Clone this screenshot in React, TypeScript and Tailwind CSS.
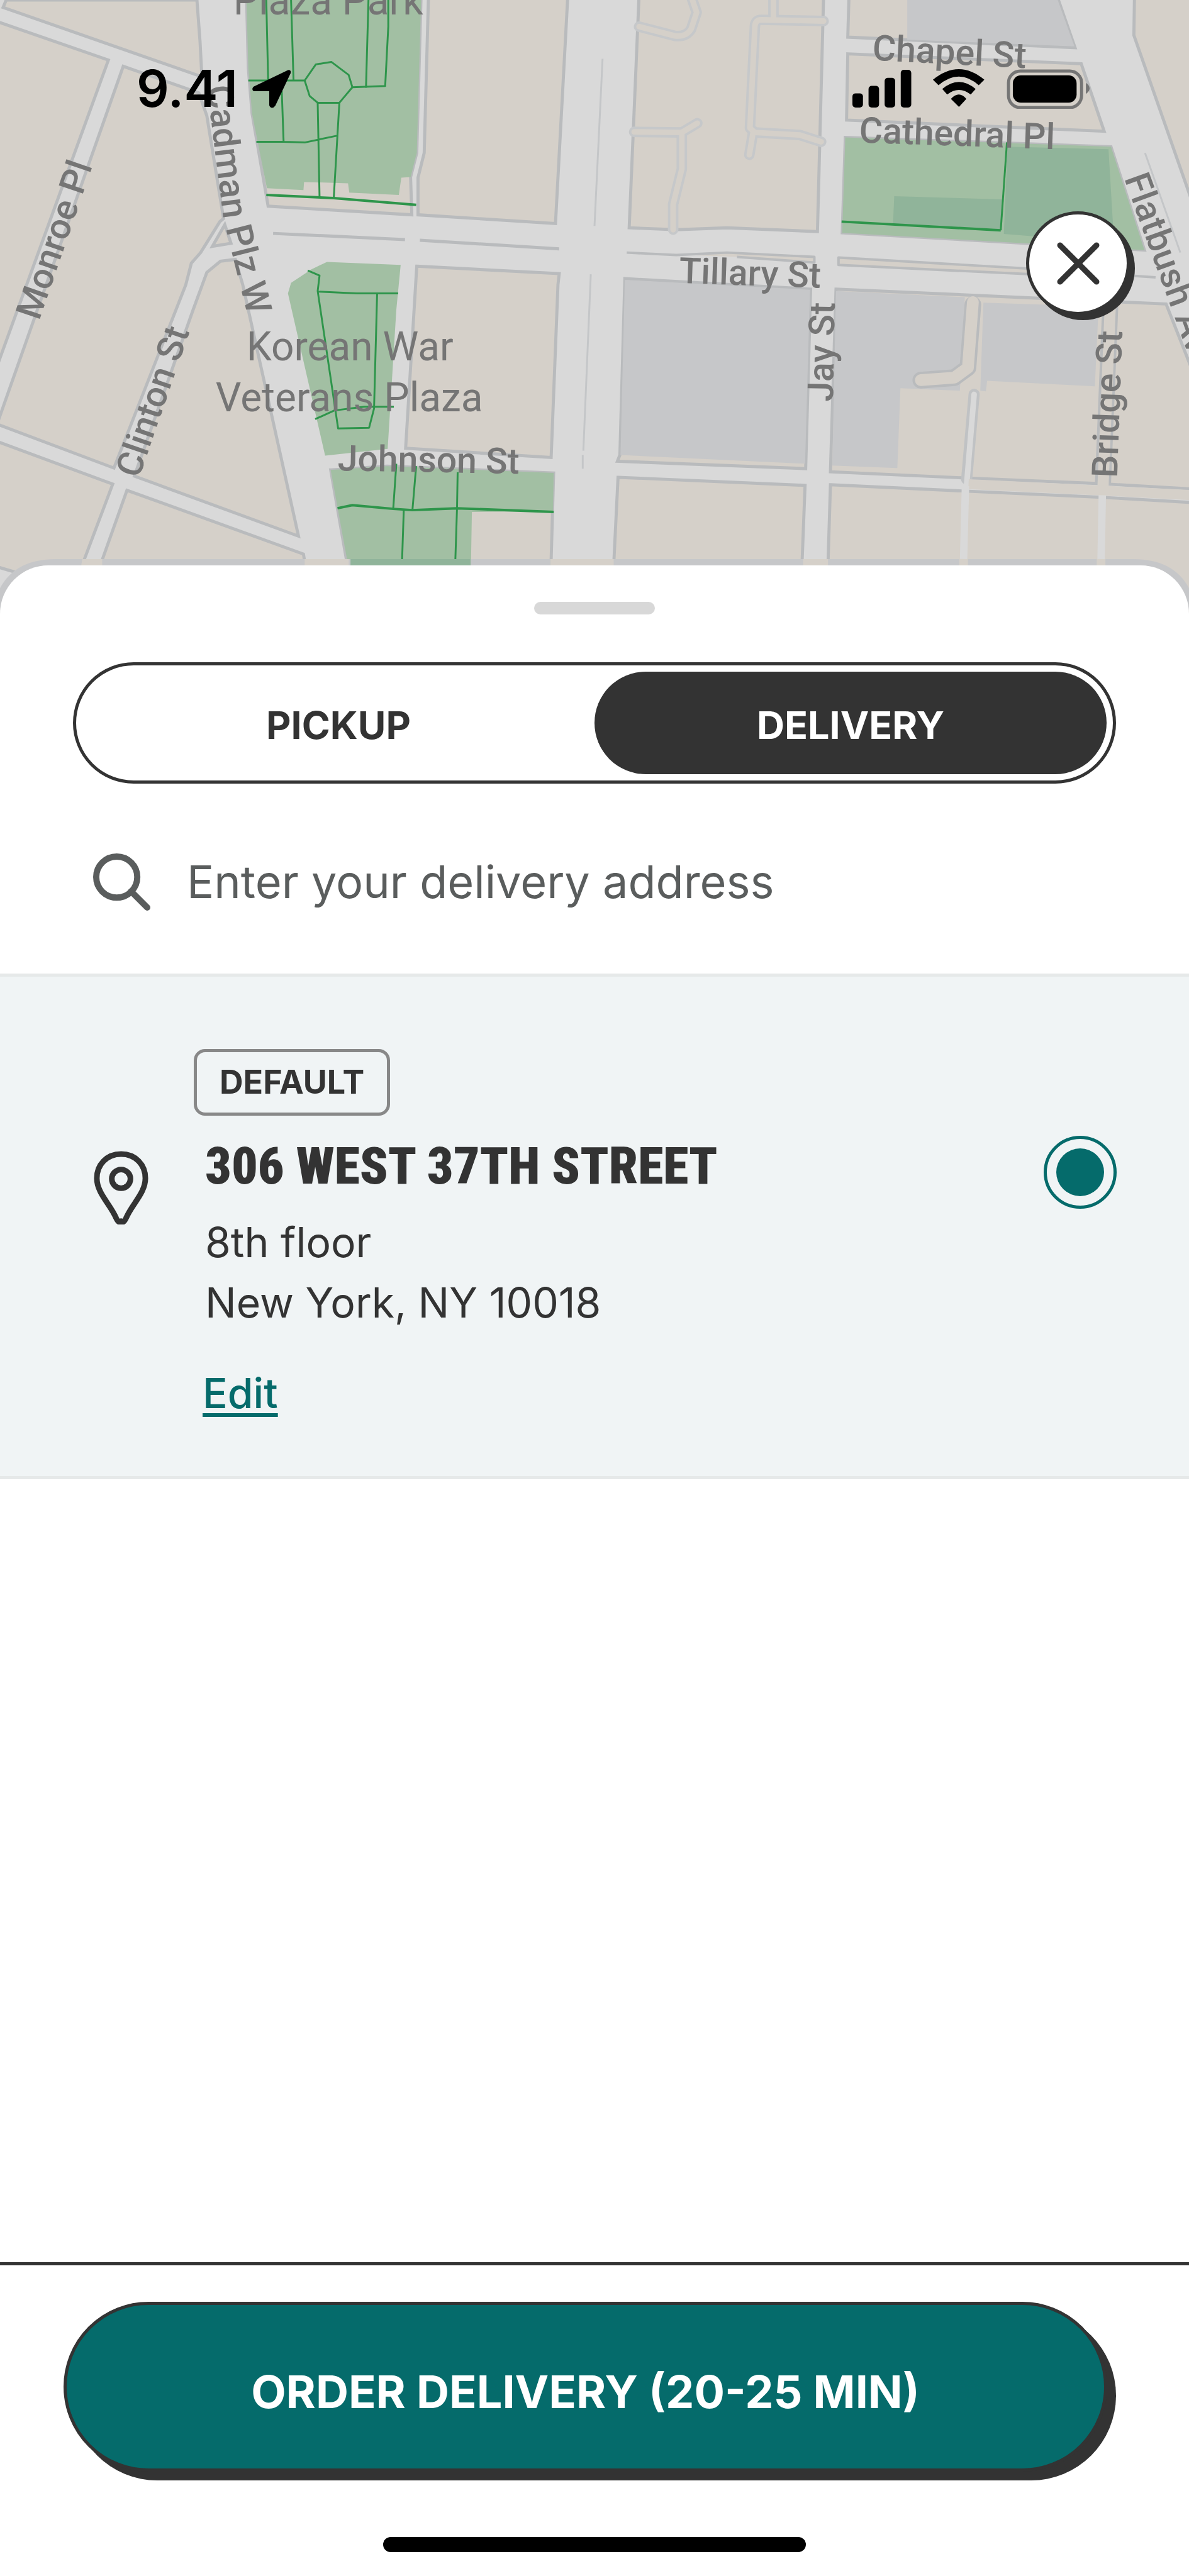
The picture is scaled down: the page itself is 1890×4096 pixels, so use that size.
import React, { useState } from 'react';

type Mode = 'pickup' | 'delivery';

const blocks = [
  '10,0 5,12 326,124 323,67 318,0',
  '-10,33 175,97 31,493 -10,606',
  '199,107 321,150 334,187 361,353 355,358 324,408 309,425 300,460 184,756 -10,683 -10,700',
  '363,363 373,393 343,398',
  '380,419 356,422 334,440 312,500 217,769 482,866 392,460',
  '-10,711 182,782 133,912 100,1010 60,940 31,926 -10,914',
  '205,792 490,895 493,913 505,1010 130,1010 162,913',
  '398,-9 401,110 407,183 433,333 665,347 663,286 673,247 680,-9',
  '692,-9 685,247 675,287 675,347 897,361 917,-9',
  '673,430 903,442 901,460 890,739 655,724',
  '534,759 625,753 894,764 887,1010 578,1010',
  '1032,-9 1016,368 1092,371 1174,368 1320,374 1330,-9',
  '1371,-9 1369,60 1736,77 1706,-9',
  '1369,87 1746,103 1783,212 1367,194',
  '1365,222 1794,237 1848,404 1360,376',
  '1832,-9 1831,57 1930,340 1930,-9',
  '1009,450 1309,467 1301,757 997,745 1001,735',
  '1350,467 1883,491 1930,610 1930,790 1771,781 1557,772 1341,762',
  '998,771 1300,784 1295,913 1293,1010 987,1010 991,913',
  '1341,783 1553,793 1774,803 1930,812 1930,1010 1334,1010',
];

const parks = [
  '398,0 401,110 407,183 431,304 490,307 491,294 562,296 564,311 644,315 648,287 663,286 673,247 680,0',
  '528,423 647,428 640,500 626,725 525,736 465,474 470,457 503,435',
  '534,759 625,753 894,764 893,826 762,827 759,1000 578,1000',
  '1365,222 1794,237 1848,404 1360,376',
];

const buildings = [
  '1465,0 1708,0 1735,75 1465,64',
  '1009,452 1308,468 1300,749 1002,735',
  '1350,470 1558,480 1550,631 1454,627 1449,756 1344,752',
  '1588,489 1774,495 1768,624 1594,615 1592,632 1583,631',
];

const footpaths = [
  'M430 0L433 130M470 0L474 130M595 0L591 142M627 0V43L622 139L569 141',
  'M401 130H492L510 104L535 100L563 121L569 141L548 166H513L500 155L492 130',
  'M455 147L458 230M414 229H458L493 230L545 219M513 166L516 318M548 166L539 319',
  'M497 437L516 445L513 470L546 692L596 691L604 660L609 474M513 471L576 474H643',
  'M509 677L540 663L588 657L636 657',
  'M640 749L635 822M672 753L666 824M739 763L738 821L735 913M652 824L649 913',
  'M1626 230L1616 372',
];

const alleys = [
  'M1115 -9L1125 20L1116 47Q1108 60 1090 58L1032 43',
  'M1249 -9V30',
  'M1330 34L1229 32Q1220 32 1219 42L1211 207L1219 214L1291 218L1326 229',
  'M1216 214L1210 250',
  'M1024 213L1101 214L1126 199',
  'M1101 214V273L1087 330V371',
];

const labels = [
  { text: 'Chapel St', x: 1408, y: 97, angle: 3 },
  { text: 'Cathedral Pl', x: 1387, y: 230, angle: 2 },
  { text: 'Tillary St', x: 1096, y: 457, angle: 2 },
  { text: 'Jay St', x: 1345, y: 649, angle: -89 },
  { text: 'Bridge St', x: 1804, y: 772, angle: -88 },
  { text: 'Monroe Pl', x: 63, y: 519, angle: -71 },
  { text: 'Clinton St', x: 224, y: 774, angle: -71 },
  { text: 'Johnson St', x: 545, y: 760, angle: 1 },
  { text: 'Flatbush Av', x: 1815, y: 288, angle: 70 },
];

const StreetMap: React.FC = () => (
  <svg viewBox="0 0 1920 1000" className="block w-full bg-[#d9d9d9]" role="img" aria-label="Map">
    <g fill="#d5d0c9" stroke="#b9bbbd" strokeWidth="5">
      {blocks.map((points) => (
        <polygon key={points} points={points} />
      ))}
    </g>
    <g fill="#c6c7c9">
      {buildings.map((points) => (
        <polygon key={points} points={points} />
      ))}
    </g>
    <g fill="#a2bfa3">
      {parks.map((points) => (
        <polygon key={points} points={points} />
      ))}
    </g>
    <g fill="#90b49a">
      <polygon points="1627,237 1790,241 1799,392 1621,378" />
      <polygon points="1444,317 1618,322 1616,370 1442,362" />
    </g>

    <g fill="none" strokeLinejoin="round">
      <g stroke="#c6c8ca" strokeWidth="17" strokeLinecap="round">
        {alleys.map((d) => (
          <path key={d} d={d} />
        ))}
      </g>
      <g stroke="#d5d0c9" strokeWidth="9" strokeLinecap="round">
        {alleys.map((d) => (
          <path key={d} d={d} />
        ))}
      </g>
      <path d="M1571 492L1563 594L1541 610L1487 614" stroke="#b9bbbd" strokeWidth="27" strokeLinecap="round" />
      <path d="M1571 488L1563 594L1541 610L1487 614" stroke="#d5d0c9" strokeWidth="19" strokeLinecap="round" />
      <path d="M1573 637L1561 774" stroke="#c0c2c4" strokeWidth="18" strokeLinecap="round" />
      <path d="M1573 637L1561 782" stroke="#d9d9d9" strokeWidth="9" strokeLinecap="round" />
      <path d="M1793 490L1781 783" stroke="#b9bbbd" strokeWidth="26" />
      <path d="M1793 490L1781 790" stroke="#d5d0c9" strokeWidth="18" />
      <path d="M1564 782L1772 792L1930 800" stroke="#d5d0c9" strokeWidth="16" />
      <path d="M1559 785L1556 903M1780 800L1778 903" stroke="#d9d9d9" strokeWidth="12" />
      <path d="M441 377L654 387M678 388L903 402" stroke="#b9bbbd" strokeWidth="5" />
      <path d="M1012 408L1092 412L1174 408L1315 415V424L1190 415" fill="#d5d0c9" stroke="#b9bbbd" strokeWidth="4" />
      <path d="M1664 443L1354 428V416L1664 434L1866 448" fill="#d5d0c9" stroke="#b9bbbd" strokeWidth="4" />
      <path d="M973 95L960 365M954 443L942 728M941 735V757M1849 247L1906 408" stroke="#c4c6c8" strokeWidth="3" />
      <g stroke="#2e954b" strokeWidth="3">
        {footpaths.map((d) => (
          <path key={d} d={d} />
        ))}
      </g>
      <path
        d="M430 315L539 320L672 331M545 821L569 816L635 822L666 824L738 821L894 827M1359 358L1616 372"
        stroke="#2e954b"
        strokeWidth="4"
      />
    </g>

    <g fill="#757575" fontFamily="Roboto, sans-serif" fontSize="58" fontWeight="500">
      {labels.map(({ text, x, y, angle }) => (
        <text key={text} transform={`translate(${x} ${y}) rotate(${angle})`}>
          {text}
        </text>
      ))}
      <path id="cadman" d="M334 140L361 355L405 530" fill="none" />
      <text>
        <textPath href="#cadman">Cadman Plz W</textPath>
      </text>
    </g>
    <g fill="#757575" fontFamily="Roboto, sans-serif" fontSize="65" textAnchor="middle">
      <text x="530" y="23">Plaza Park</text>
      <text x="565" y="582">Korean War</text>
      <text x="564" y="664">Veterans Plaza</text>
    </g>

    {/* rim of shade along the top of the sheet */}
    <path d="M0 985V950Q25 903 90 903H1830Q1895 903 1920 950V985Z" fill="#c6c7c9" />
    <path
      d="M133 903H165V914H131ZM492 903H563V914H492ZM889 903H991V914H889ZM1297 903H1337V914H1297ZM1549 903H1563V914H1549ZM1771 903H1785V914H1771Z"
      fill="#d5d0c9"
    />
    <path d="M566 903H760V914H566Z" fill="#90b49a" />
  </svg>
);

const StatusBar: React.FC = () => (
  <div className="absolute inset-x-0 top-[93px] flex h-24 items-center justify-between pr-[157px] pl-[217px]">
    <div className="flex items-center gap-[22px]">
      <span className="text-[81px] leading-none font-semibold">9.41</span>
      <svg viewBox="0 0 63 62" className="w-[63px]" aria-hidden="true">
        <path
          d="M57 4L5 29Q2 31 4 33H28Q30 33 30 35V57Q32 62 36 57L60 6Q61 2 57 4Z"
          stroke="#000"
          strokeWidth="4"
          strokeLinejoin="round"
        />
      </svg>
    </div>
    <svg viewBox="0 0 384 64" className="w-[378px]" aria-hidden="true">
      <rect x="0" y="39" width="17" height="23" rx="5" />
      <rect x="26" y="27" width="17" height="35" rx="5" />
      <rect x="52" y="14" width="17" height="48" rx="5" />
      <rect x="78" y="1" width="17" height="61" rx="5" />
      <path d="M130 17Q172 -17 213 17L204 26Q172 -2 139 26Z" />
      <path d="M145 32Q172 9 199 32L191 41Q172 26 153 41Z" />
      <path d="M159 48Q172 34 184 48L172 61Z" />
      <rect x="252" y="3" width="118" height="59" rx="19" fill="none" stroke="#757575" strokeWidth="5" />
      <rect x="259" y="10" width="103" height="44" rx="13" />
      <path d="M377 22Q383 26 383 31Q383 36 377 40Z" fill="#757575" />
    </svg>
  </div>
);

export default function App() {
  const [mode, setMode] = useState<Mode>('delivery');

  const tab = (value: Mode, label: string) => (
    <button
      type="button"
      aria-pressed={mode === value}
      onClick={() => setMode(value)}
      className={`flex-1 rounded-full pt-2 ${mode === value ? 'bg-[#333] text-white' : 'text-[#333]'}`}
    >
      {label}
    </button>
  );

  return (
    <div className="flex min-h-screen flex-col bg-white font-[Inter,sans-serif] text-[#333]">
      <header className="relative text-black">
        <StreetMap />
        <StatusBar />
        <button
          type="button"
          aria-label="Close"
          className="absolute top-[336px] right-[94px] flex size-[165px] items-center justify-center rounded-full border-[5px] border-[#333] bg-white shadow-[8px_8px_0_#333]"
        >
          <svg viewBox="0 0 68 68" className="w-[68px]" fill="none" stroke="#333" strokeWidth="9" strokeLinecap="round">
            <path d="M5 5L63 63M63 5L5 63" />
          </svg>
        </button>
      </header>

      <main className="relative -mt-[85px] flex flex-1 flex-col rounded-t-[77px] bg-white pt-[58px]">
        <div className="h-5 w-[192px] self-center rounded-full bg-[#d8d8d8]" />

        <div className="mx-[116px] mt-[76px] flex h-[193px] rounded-full border-[5px] border-[#333] p-[10px] text-[61px] font-bold">
          {tab('pickup', 'PICKUP')}
          {tab('delivery', 'DELIVERY')}
        </div>

        <label className="flex h-[302px] items-center gap-[58px] pt-[10px] pr-[116px] pl-[148px]">
          <svg viewBox="0 0 92 92" className="w-[91px]" fill="none" stroke="#5a5d5d" strokeWidth="10">
            <circle cx="38" cy="38" r="33" />
            <path d="M61 61L87 87" strokeLinecap="round" />
          </svg>
          <input
            type="text"
            aria-label="Delivery address"
            placeholder="Enter your delivery address"
            className="min-w-0 flex-1 text-[72px] outline-none placeholder:text-[#5a5d5d]"
          />
        </label>

        <section className="flex items-start border-y-[5px] border-[#e6e9e9] bg-[#f0f4f5] pt-[115px] pr-[115px] pb-[84px] pl-[148px]">
          <svg viewBox="0 0 90 118" className="mt-[162px] w-[89px]" fill="none" stroke="#333" strokeWidth="9">
            <path
              d="M45 5C22 5 6 22 6 44C6 68 28 86 37 108Q41 117 45 113Q49 117 53 108C62 86 84 68 84 44C84 22 68 5 45 5Z"
              strokeLinejoin="round"
            />
            <circle cx="45" cy="45" r="15" />
          </svg>

          <div className="ml-[71px] flex flex-1 flex-col items-start">
            <span className="flex h-[106px] items-center rounded-[18px] border-[5px] border-[#888] px-9 text-[52px] font-bold">
              DEFAULT
            </span>
            <label
              htmlFor="address"
              className="mt-8 pl-[18px] font-['Roboto_Condensed',Roboto,sans-serif] text-[82px] leading-24 font-black"
            >
              306 WEST 37TH STREET
            </label>
            <p className="mt-[25px] pl-[18px] text-[66px] leading-24">
              8th floor
              <br />
              New York, NY 10018
            </p>
            <a
              href="#edit"
              className="mt-12 ml-[14px] text-[66px] leading-24 font-medium text-[#056b6b] underline decoration-[6px] underline-offset-8"
            >
              Edit
            </a>
          </div>

          <input
            id="address"
            type="radio"
            name="address"
            defaultChecked
            className="mt-[138px] size-[116px] appearance-none rounded-full border-[5px] border-[#056b6b] bg-clip-content p-[15px] checked:bg-[#056b6b]"
          />
        </section>
      </main>

      <footer className="flex flex-col border-t-[5px] border-[#333] pt-[58px] pb-[38px]">
        <button
          type="button"
          className="mr-[130px] ml-[101px] h-[270px] rounded-full border-[5px] border-[#333] bg-[#056b6b] pt-4 text-[72px] font-bold text-white shadow-[14px_14px_0_#333]"
        >
          ORDER DELIVERY (20-25 MIN)
        </button>
        <div className="mt-[104px] h-6 w-[672px] self-center rounded-full bg-black" />
      </footer>
    </div>
  );
}
